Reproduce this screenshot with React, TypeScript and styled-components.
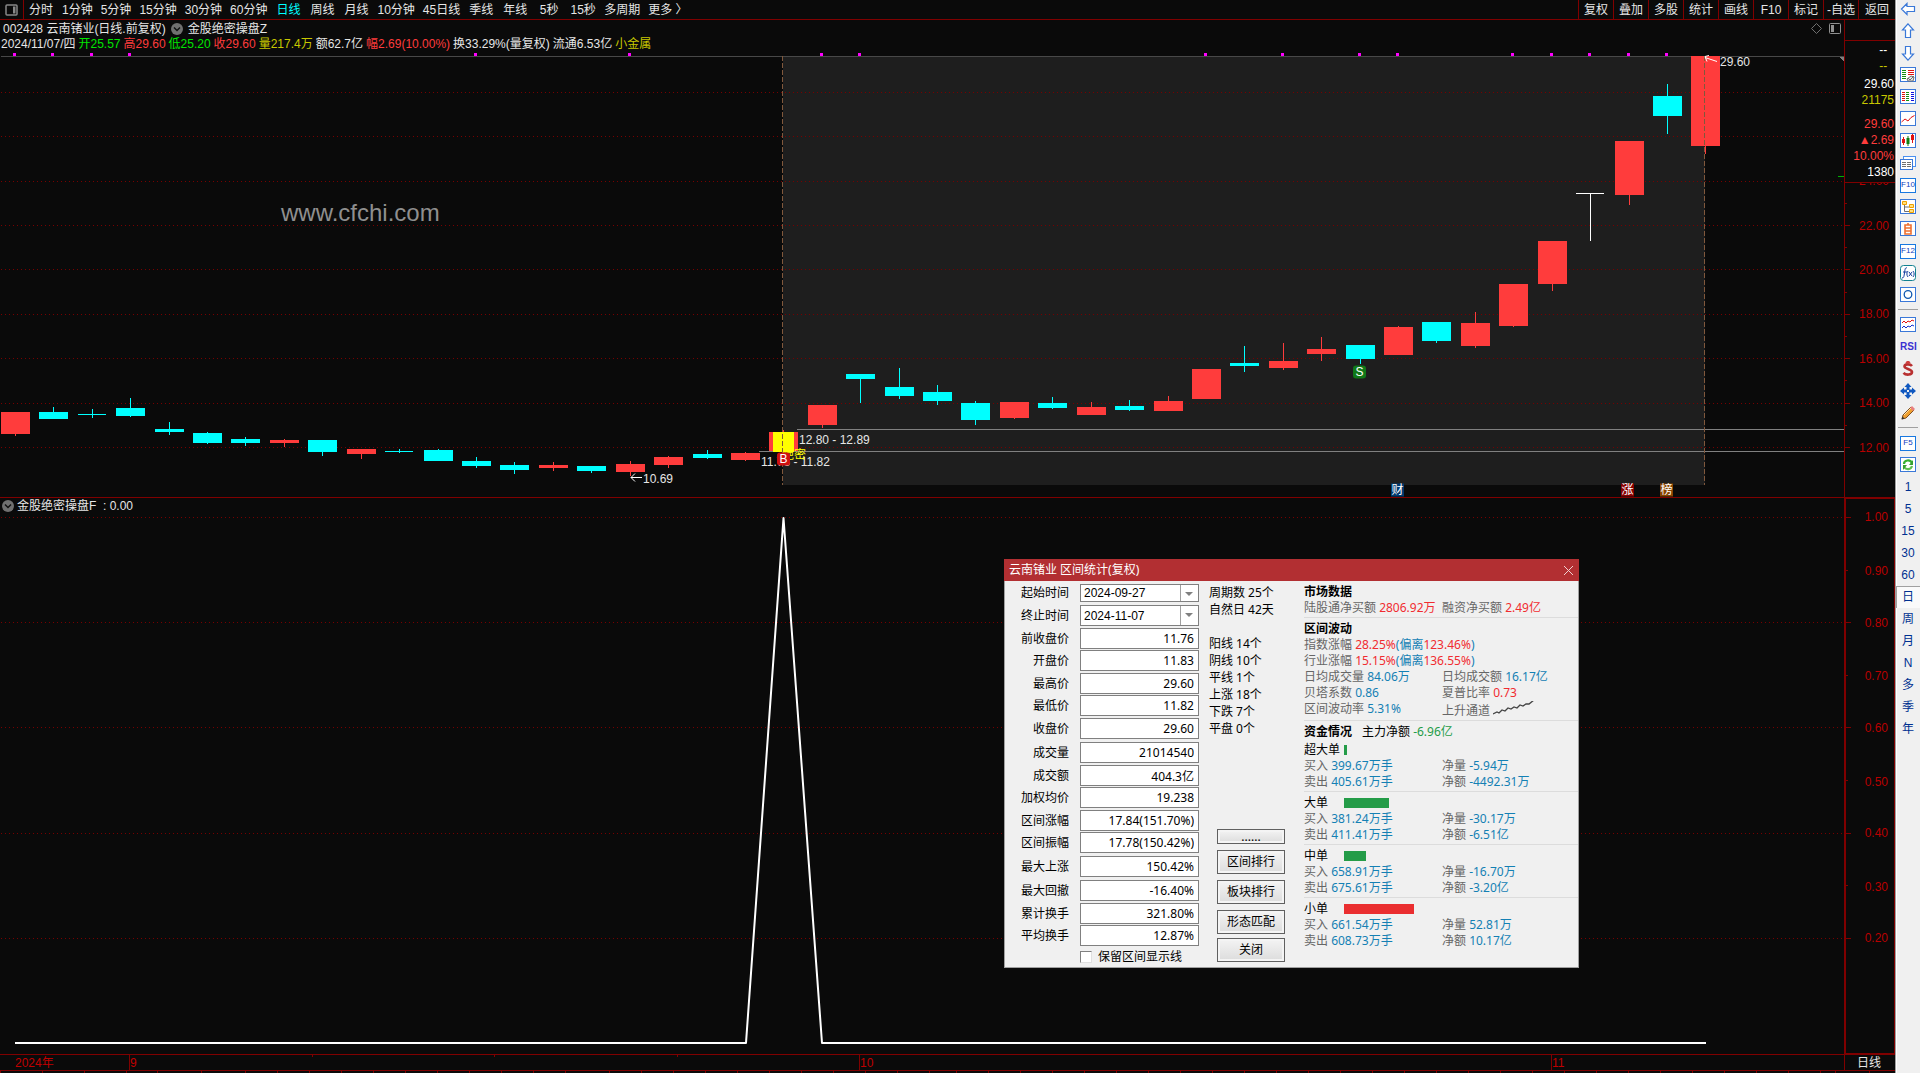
import React from 'react';
import styled, { createGlobalStyle, css } from 'styled-components';

const SANS = '"Liberation Sans", "Noto Sans CJK SC", sans-serif';
const UI = '"Noto Sans", "Noto Sans CJK SC", sans-serif';
const LINE = '#800000';
const RED = '#ff3c3c';
const CYAN = '#00ffff';

const Global = createGlobalStyle`
  * { box-sizing: border-box; }
  body { margin: 0; background: #0a0a0a; overflow: hidden; }
  button, input, select { font: inherit; color: inherit; }
`;

/* ---------- data ---------- */

type Candle = { c: 'r' | 'c' | 'w'; top: number; bottom: number; high: number; low: number };
const k = (c: Candle['c'], top: number, bottom: number, high = top, low = bottom): Candle => ({ c, top, bottom, high, low });

const CANDLES: Candle[] = [
  k('r', 412, 434, 412, 436), k('c', 412, 419, 407, 419), k('c', 414, 415, 409, 418), k('c', 408, 416, 398, 417),
  k('c', 429, 432, 422, 435), k('c', 433, 443, 432, 444), k('c', 439, 443, 437, 446), k('r', 440, 443, 439, 447),
  k('c', 440, 452, 440, 456), k('r', 449, 454, 449, 459), k('c', 451, 452, 449, 453), k('c', 450, 461, 449, 461),
  k('c', 461, 466, 457, 468), k('c', 465, 470, 462, 474), k('r', 465, 468, 462, 471), k('c', 466, 471, 466, 473),
  k('r', 464, 472, 461, 476), k('r', 457, 465, 456, 468), k('c', 454, 458, 450, 459), k('r', 453, 460, 452, 461),
  k('r', 432, 451, 430, 451), k('r', 405, 425, 405, 428), k('c', 374, 379, 374, 403), k('c', 387, 396, 368, 399),
  k('c', 392, 401, 385, 405), k('c', 403, 420, 401, 425), k('r', 402, 418, 402, 419), k('c', 403, 408, 397, 409),
  k('r', 407, 415, 402, 415), k('c', 406, 410, 400, 411), k('r', 401, 411, 396, 411), k('r', 369, 399),
  k('c', 363, 366, 346, 372), k('r', 361, 368, 343, 370), k('r', 349, 354, 337, 361), k('c', 345, 359, 345, 364),
  k('r', 327, 355, 326, 355), k('c', 322, 341, 322, 343), k('r', 323, 346, 312, 348), k('r', 284, 326, 284, 327),
  k('r', 241, 284, 241, 291), k('w', 193, 194, 193, 241), k('r', 141, 195, 141, 205), k('c', 96, 116, 84, 134),
  k('r', 56, 146, 56, 154),
];
const centre = (i: number) => Math.floor(15.45 + 38.42 * i);
const FILL = { r: RED, c: CYAN, w: '#ffffff' };
const MARKS = [0, 1, 2, 3, 12, 16, 21, 22, 31, 33, 35, 36, 39, 40, 41, 42, 43];

const PERIODS = ['分时', '1分钟', '5分钟', '15分钟', '30分钟', '60分钟', '日线', '周线', '月线', '10分钟', '45日线', '季线', '年线', '5秒', '15秒', '多周期', '更多 〉'];
const ACTIONS = ['复权', '叠加', '多股', '统计', '画线', 'F10', '标记', '-自选', '返回'];

const PLOT_W = 1844;
const PRICE = { y: 51, h: 446 };
const IND = { y: 514, h: 540 };

/* ---------- frame ---------- */

const Screen = styled.div`
  display: flex;
  height: 100vh;
  background: #0a0a0a;
  color: #e6e6e6;
  font: 12px/16px ${SANS};
`;
const Main = styled.main`
  flex: 1;
  min-width: 0;
  display: grid;
  grid-template-rows: 20px minmax(0, 478fr) minmax(0, 556fr) 17px 2px;
`;
const TopBar = styled.nav`
  display: flex;
  justify-content: space-between;
  border-bottom: 1px solid ${LINE};
  overflow: hidden;
`;
const Group = styled.div`
  display: flex;
`;
const plain = css`
  border: 0;
  padding: 0;
  background: none;
  white-space: nowrap;
  cursor: pointer;
`;
const LayoutButton = styled.button`
  ${plain}
  width: 24px;
  display: grid;
  place-items: center;
  border-right: 1px solid ${LINE};
`;
const Period = styled.button<{ $on?: boolean }>`
  ${plain}
  min-width: 34px;
  padding: 0 4px;
  color: ${p => (p.$on ? CYAN : '#e6e6e6')};
`;
const Action = styled.button`
  ${plain}
  width: 35px;
  border-left: 1px solid ${LINE};
  &:last-child { width: 37px; }
`;
const Pane = styled.section`
  display: grid;
  grid-template-columns: minmax(0, 1fr) 51px;
  min-height: 0;
`;
const PricePane = styled(Pane)`
  border-bottom: 1px solid ${LINE};
`;
const Column = styled.div`
  display: flex;
  flex-direction: column;
  min-width: 0;
  min-height: 0;
`;
const TitleRow = styled.div`
  display: flex;
  align-items: center;
  gap: 5px;
  height: 17px;
  padding: 0 3px;
  white-space: nowrap;
`;
const QuoteRow = styled.div`
  display: flex;
  align-items: center;
  gap: 3px;
  height: 14px;
  padding-left: 1px;
  white-space: nowrap;
`;
const IndicatorRow = styled(TitleRow)`
  gap: 3px;
  height: 16px;
  padding: 0 2px;
`;
const Tone = styled.span<{ $c?: string }>`
  color: ${p => p.$c || '#e6e6e6'};
`;
const Corner = styled.div`
  display: flex;
  align-items: center;
  gap: 7px;
  margin-left: auto;
`;
const Plot = styled.div`
  position: relative;
  flex: 1;
  min-height: 0;
`;
const Drawing = styled.svg`
  position: absolute;
  inset: 0;
  width: 100%;
  height: 100%;
  display: block;
`;
const Note = styled.span<{ $c?: string }>`
  position: absolute;
  transform: translateY(-50%);
  line-height: 14px;
  white-space: nowrap;
  color: ${p => p.$c || '#e6e6e6'};
`;
const Badge = styled(Note)<{ $bg: string; $round?: boolean }>`
  width: 13px;
  height: 13px;
  line-height: 13px;
  text-align: center;
  color: #fff;
  background: ${p => p.$bg};
  border-radius: ${p => (p.$round ? 3 : 0)}px;
`;
const Watermark = styled(Note)`
  font-size: 24px;
  line-height: 28px;
  color: #8f8f8f;
`;
const AxisColumn = styled.div<{ $boxed?: boolean }>`
  position: relative;
  border-left: 1px solid ${LINE};
  ${p => p.$boxed && css`
    border: 1px solid ${LINE};
    border-left-width: 2px;
  `}
`;
const AxisLabel = styled.span`
  position: absolute;
  right: 6px;
  transform: translateY(-50%);
  line-height: 14px;
  color: #b80000;
`;
const Tick = styled.i<{ $major: boolean }>`
  position: absolute;
  left: 0;
  width: ${p => (p.$major ? 5 : 2)}px;
  height: 1px;
  background: ${LINE};
`;
const QuotePanel = styled.div`
  position: relative;
  z-index: 1;
  background: #0a0a0a;
  margin-top: 20px;
  border: solid ${LINE};
  border-width: 1px 0;
  padding: 1px 0 2px;
  display: flex;
  flex-direction: column;
  text-align: right;
`;
const Quote = styled.span<{ $c: string; $gap?: number }>`
  padding-right: 1px;
  margin-top: ${p => p.$gap || 0}px;
  color: ${p => p.$c};
`;
const TimeRow = styled.div`
  display: grid;
  grid-template-columns: minmax(0, 1fr) 51px;
  border: solid ${LINE};
  border-width: 1px 0;
`;
const TimeTrack = styled.div`
  position: relative;
`;
const TimeLabel = styled(Note)`
  top: 50%;
  color: #c00000;
`;
const TimeUnit = styled.div`
  border-left: 1px solid ${LINE};
  padding-left: 12px;
  line-height: 16px;
`;
const Ruler = styled.svg`
  display: block;
  width: 100%;
  height: 2px;
`;

/* ---------- right tool strip ---------- */

const Strip = styled.aside`
  width: 25px;
  flex: none;
  display: flex;
  flex-direction: column;
  background: #f0f0f0;
  border-left: 1px solid #a0a0a0;
  box-shadow: inset 1px 0 #fff;
  color: #003090;
`;
const Tool = styled.button<{ $on?: boolean; $head?: boolean }>`
  ${plain}
  flex: none;
  display: grid;
  place-items: center;
  height: ${p => (p.$head ? 20 : 22)}px;
  ${p => p.$on && css`
    background: #fafafa;
    box-shadow: inset 1px 1px #a0a0a0;
  `}
`;
const Rule = styled.hr`
  flex: none;
  width: 20px;
  height: 1px;
  margin: 3px auto 4px;
  border: 0;
  background: #a0a0a0;
`;
const TextIcon = styled.span<{ $bare?: boolean }>`
  width: 16px;
  height: 15px;
  display: grid;
  place-items: center;
  font-size: ${p => (p.$bare ? 10 : 8)}px;
  font-weight: ${p => (p.$bare ? 700 : 400)};
  line-height: 12px;
  color: ${p => (p.$bare ? '#3a30d0' : '#1040c0')};
  background: ${p => (p.$bare ? 'none' : '#fff')};
  border: ${p => (p.$bare ? '0' : '1px solid #1878e0')};
`;

const Ico = ({ children, frame = false }: { children: React.ReactNode; frame?: boolean }) => (
  <svg width="16" height="16" viewBox="0 0 16 16" fill="none" aria-hidden="true">
    {frame && <rect x=".5" y=".5" width="15" height="14" fill="#fff" stroke="#3a78d8" />}
    {children}
  </svg>
);
const rows = (x: number, w: number, color: string, n = 5) =>
  Array.from({ length: n }, (_, i) => <path key={`${x}${i}`} d={`M${x} ${3.5 + i * 2}h${w}`} stroke={color} />);

const TOOLS: [string, React.ReactNode][] = [
  ['后退', <Ico><path d="M1.5 7 7 1.5V4.500H14.500V9.500H7V12.500Z" fill="#fff" stroke="#3a78d8" strokeWidth="1.2" /></Ico>],
  ['上移', <Ico><path d="M8 .8 13.500 7H10.500V14.500H5.500V7H2.500Z" fill="#fff" stroke="#3a78d8" strokeWidth="1.200" /></Ico>],
  ['下移', <Ico><path d="M8 15.200 13.500 9H10.500V1.500H5.500V9H2.500Z" fill="#fff" stroke="#3a78d8" strokeWidth="1.200" /></Ico>],
  ['报价', <Ico frame><g shapeRendering="crispEdges">{rows(2, 4, '#109010')}{rows(8, 6, '#e01010', 3)}</g><path d="M7 12l4-3 3 1-1 4-5 0z" fill="#e8e8e8" stroke="#707070" /><path d="M8 11l2 2 4-4" stroke="#707070" /></Ico>],
  ['列表', <Ico frame><g shapeRendering="crispEdges">{rows(2, 3, '#e01010')}{rows(6, 3, '#109010')}{rows(11, 3, '#1010e0')}</g></Ico>],
  ['分时图', <Ico frame><path d="M1.500 11 5 8 8 10 11 6.500 14.500 4.500" stroke="#e01010" /></Ico>],
  ['K线图', <Ico frame><path d="M3.500 4v8M12.500 1v9" stroke="#e01010" /><path d="M8 3v10" stroke="#108010" /><path d="M2 6h3v4H2zM11 2h3v5h-3z" fill="#e01010" /><path d="M6.500 5h3v6h-3z" fill="#108010" /></Ico>],
  ['多窗口', <Ico><rect x="3.500" y="1.500" width="12" height="10" fill="#fff" stroke="#4a90f0" /><rect x=".5" y="4.500" width="12" height="10" fill="#fff" stroke="#3a78d8" /><path d="M2 7.500h4M7 7.500h4M2 9.500h4M7 9.500h4M2 11.500h4M7 11.500h4" stroke="#707070" /></Ico>],
  ['基本资料', <TextIcon>F10</TextIcon>],
  ['板块树', <Ico frame><path d="M4.500 5v7.500H9M4.500 8H9" stroke="#707070" /><path d="M2.500 2.500h4v3h-4zM9.500 5.500h4v3h-4zM9.500 10.500h4v3h-4z" fill="#ffe080" stroke="#f0a000" /></Ico>],
  ['自选股', <Ico frame><path d="M5 4h6v9H5zM8 2v2M5 7h6M5 10h6" stroke="#f07030" strokeWidth="1.600" /></Ico>],
  ['交易', <TextIcon>F12</TextIcon>],
  ['公式', <Ico><rect x=".5" y=".5" width="15" height="15" rx="3" fill="#fff" stroke="#108090" /><path d="M7 3C5 2 5 5 4.500 8S4 13 2 13M3 7h4M8 6c-1.500 2-1.500 4 0 6M13 6c1.500 2 1.500 4 0 6M9 7l3 4M12 7l-3 4" stroke="#1840a0" /></Ico>],
  ['圆', <Ico frame><circle cx="8" cy="7.500" r="3.800" stroke="#1058b0" strokeWidth="1.300" /></Ico>],
  ['-', null],
  ['叠加线', <Ico frame><path d="M2 6l2-2 2 2 2-2 2 1 2-2 2 1" stroke="#e01010" /><path d="M2 11l2-2 2 2 2-2 2 1 2-2 2 1" stroke="#1030d0" /></Ico>],
  ['RSI', <TextIcon $bare>RSI</TextIcon>],
  ['资金', <Ico><path d="M12 5C10 2.500 4.500 3 4.500 5.500S12 8 12 11s-6 3.500-8.500.8" stroke="#b83030" strokeWidth="2.600" /><path d="M8 0v3M6 2l2-2 2 2" stroke="#d04040" strokeWidth="1.500" /></Ico>],
  ['移动', <Ico><path d="M8 0l3.500 4H9.500v2.500H12v-2L16 8l-4 3.500v-2H9.500V12h2L8 16l-3.500-4h2V9.500H4v2L0 8l4-3.500v2h2.500V4h-2z" fill="#1058c0" /><path d="M7 7h2v2H7z" fill="#f0f0f0" /></Ico>],
  ['画笔', <Ico><path d="M2 14l1-4 8-8 3 3-8 8z" fill="#f0a030" stroke="#805020" /><path d="M10 3l3 3 2-2-3-3z" fill="#e88080" /><path d="M4 10l7-7" stroke="#ffe0a0" /><path d="M1.500 14.500l1-3 2 2z" fill="#333" /></Ico>],
  ['-', null],
  ['切换', <TextIcon>F5</TextIcon>],
  ['刷新', <Ico frame><path d="M4 7c0-4 6-5 8-1" stroke="#38b030" strokeWidth="2.200" /><path d="M12 9c-1 4-6 4-8 1" stroke="#60c050" strokeWidth="2.200" /><path d="M13 3v5H9zM3 13V8h4z" fill="#38a030" /></Ico>],
];
const SPANS = ['1', '5', '15', '30', '60', '日', '周', '月', 'N', '多', '季', '年'];

/* ---------- statistics window ---------- */

const Window = styled.section`
  position: absolute;
  left: 1004px;
  top: 559px;
  width: 575px;
  background: #f0f0f0;
  border: 1px solid #a0a0a0;
  border-top: 0;
  color: #000;
  font: 12px/16px ${UI};
`;
const WindowBar = styled.header`
  display: flex;
  align-items: center;
  justify-content: space-between;
  height: 22px;
  margin: 0 -1px;
  padding: 0 5px;
  background: #b22f32;
  color: #fff;
`;
const Close = styled.button`
  ${plain}
  width: 11px;
  height: 18px;
  display: flex;
  align-items: center;
`;
const WindowBody = styled.div`
  display: grid;
  grid-template-columns: 194px 85px minmax(0, 1fr);
  gap: 10px;
  height: 386px;
`;
const Form = styled.form`
  display: flex;
  flex-direction: column;
  gap: 3px;
  padding-top: 3px;
`;
const Fields = styled.div`
  display: flex;
  flex-direction: column;
`;
const Field = styled.label<{ $h?: number }>`
  display: grid;
  grid-template-columns: 64px 119px;
  column-gap: 11px;
  align-items: center;
  height: ${p => p.$h || 21}px;
  text-align: right;
  &:nth-child(odd) { margin-bottom: 2px; }
  &:nth-child(even) { margin-bottom: 1px; }
  &:last-child { margin-bottom: 0; }
`;
const Value = styled.input`
  width: 100%;
  height: 100%;
  padding: 0 4px;
  border: 1px solid #808080;
  background: #fff;
  text-align: right;
  outline: 0;
`;
const Picker = styled.span`
  position: relative;
  display: block;
  height: 100%;
  border: 1px solid #808080;
  background: #fff;
  &::before {
    content: '';
    position: absolute;
    right: 17px;
    top: 0;
    bottom: 0;
    border-left: 1px solid #a0a0a0;
  }
  &::after {
    content: '';
    position: absolute;
    right: 5px;
    top: 7px;
    border: 4px solid transparent;
    border-top-color: #808080;
    border-bottom: 0;
    pointer-events: none;
  }
`;
const Dates = styled.select`
  appearance: none;
  display: block;
  width: 100%;
  height: 100%;
  padding: 0 20px 0 3px;
  border: 0;
  border-radius: 0;
  background: transparent;
  font: 12px/16px ${SANS};
  outline: 0;
`;
const Keep = styled.label`
  display: flex;
  align-items: center;
  gap: 6px;
  margin-left: 75px;
  white-space: nowrap;
  input {
    appearance: none;
    width: 12px;
    height: 12px;
    margin: 0;
    background: #fff;
    border: 1px solid;
    border-color: #808080 #e0e0e0 #e0e0e0 #808080;
  }
`;
const Middle = styled.div`
  display: flex;
  flex-direction: column;
  justify-content: space-between;
  padding: 3px 0 5px;
`;
const Counts = styled.div`
  line-height: 17px;
  white-space: nowrap;
  p { margin: 0; }
  p:nth-child(3) { margin-top: 17px; }
`;
const Buttons = styled.div`
  display: flex;
  flex-direction: column;
  gap: 4px;
  margin-left: 8px;
  width: 68px;
`;
const Push = styled.button<{ $slim?: boolean }>`
  height: ${p => (p.$slim ? 15 : 24)}px;
  padding: 0;
  border: 1px solid #606060;
  box-shadow: inset 0 0 0 2px #f4f4f4;
  background: linear-gradient(#f4f4f4, #dcdcdc);
  line-height: ${p => (p.$slim ? 12 : 16)}px;
  white-space: nowrap;
  & + &:not(:last-child) { margin-top: 2px; }
  &:first-child { margin-bottom: 2px; }
`;
const Report = styled.div`
  white-space: nowrap;
`;
const Part = styled.div<{ $b: number }>`
  padding: 3px 0 ${p => p.$b}px;
  border-bottom: 1px solid #dcdcdc;
  &:last-child { border: 0; }
`;
const Pair = styled.div`
  display: grid;
  grid-template-columns: 138px 1fr;
  height: 16px;
  color: #666;
`;
const Heading = styled.h3`
  margin: 0;
  height: 16px;
  font-size: 12px;
  line-height: 16px;
`;
const HeadLine = styled.div`
  display: flex;
  gap: 10px;
  height: 18px;
`;
const OrderLine = styled.div`
  display: grid;
  grid-template-columns: 40px 1fr;
  align-items: center;
  height: 16px;
`;
const Bar = styled.i<{ $c: string }>`
  height: 10px;
  background: ${p => p.$c};
`;
const B = styled.span` color: #1480b4; `;
const R = styled.span` color: #f02c30; `;
const G = styled.span` color: #249c48; `;

const GROUPS: [string, string][][] = [
  [['前收盘价', '11.76'], ['开盘价', '11.83'], ['最高价', '29.60'], ['最低价', '11.82'], ['收盘价', '29.60']],
  [['成交量', '21014540'], ['成交额', '404.3亿'], ['加权均价', '19.238'], ['区间涨幅', '17.84(151.70%)'], ['区间振幅', '17.78(150.42%)']],
  [['最大上涨', '150.42%']],
  [['最大回撤', '-16.40%'], ['累计换手', '321.80%'], ['平均换手', '12.87%']],
];
const ORDERS = [
  { name: '超大单', w: 3, c: '#249c48', v: ['399.67万手', '-5.94万', '405.61万手', '-4492.31万'] },
  { name: '大单', w: 45, c: '#249c48', v: ['381.24万手', '-30.17万', '411.41万手', '-6.51亿'] },
  { name: '中单', w: 22, c: '#249c48', v: ['658.91万手', '-16.70万', '675.61万手', '-3.20亿'] },
  { name: '小单', w: 70, c: '#ea2e30', v: ['661.54万手', '52.81万', '608.73万手', '10.17亿'] },
];

function Order({ o }: { o: (typeof ORDERS)[number] }) {
  return (
    <>
      <OrderLine>{o.name}<Bar $c={o.c} style={{ width: o.w }} /></OrderLine>
      <Pair><span>买入 <B>{o.v[0]}</B></span><span>净量 <B>{o.v[1]}</B></span></Pair>
      <Pair><span>卖出 <B>{o.v[2]}</B></span><span>净额 <B>{o.v[3]}</B></span></Pair>
    </>
  );
}

function Statistics() {
  return (
    <Window role="dialog" aria-label="区间统计">
      <WindowBar>
        <span>云南锗业 区间统计(复权)</span>
        <Close aria-label="关闭窗口"><svg width="11" height="11" viewBox="0 0 11 11"><path d="M1 1l9 9M10 1l-9 9" stroke="#f0d0d0" fill="none" /></svg></Close>
      </WindowBar>
      <WindowBody>
        <Form onSubmit={e => e.preventDefault()}>
          <Fields>
            <Field $h={18}>起始时间<Picker><Dates><option>2024-09-27</option></Dates></Picker></Field>
          </Fields>
          {GROUPS.map((g, i) => (
            <Fields key={i}>
              {i === 0 && <Field>终止时间<Picker><Dates><option>2024-11-07</option></Dates></Picker></Field>}
              {g.map(([name, v]) => <Field key={name}>{name}<Value readOnly value={v} /></Field>)}
            </Fields>
          ))}
          <Keep><input type="checkbox" />保留区间显示线</Keep>
        </Form>
        <Middle>
          <Counts>
            <p>周期数 25个</p><p>自然日 42天</p>
            <p>阳线 14个</p><p>阴线 10个</p><p>平线 1个</p><p>上涨 18个</p><p>下跌 7个</p><p>平盘 0个</p>
          </Counts>
          <Buttons>
            <Push $slim>......</Push><Push>区间排行</Push><Push>板块排行</Push><Push>形态匹配</Push><Push>关闭</Push>
          </Buttons>
        </Middle>
        <Report>
          <Part $b={1}>
            <Heading>市场数据</Heading>
            <Pair><span>陆股通净买额 <R>2806.92万</R></span><span>融资净买额 <R>2.49亿</R></span></Pair>
          </Part>
          <Part $b={3}>
            <Heading>区间波动</Heading>
            <Pair><span>指数涨幅 <R>28.25%</R><B>(偏离</B><R>123.46%</R><B>)</B></span></Pair>
            <Pair><span>行业涨幅 <R>15.15%</R><B>(偏离</B><R>136.55%</R><B>)</B></span></Pair>
            <Pair><span>日均成交量 <B>84.06万</B></span><span>日均成交额 <B>16.17亿</B></span></Pair>
            <Pair><span>贝塔系数 <B>0.86</B></span><span>夏普比率 <R>0.73</R></span></Pair>
            <Pair>
              <span>区间波动率 <B>5.31%</B></span>
              <span>上升通道 <svg width="41" height="14" viewBox="0 0 41 14"><path d="M0 13l4-2 2 1 3-3 3 1 3-3 3 1 3-2 3 1 3-3 3 1 3-2 3 0 5-4" stroke="#444" strokeWidth="1.300" fill="none" /></svg></span>
            </Pair>
          </Part>
          <Part $b={1}>
            <HeadLine><Heading>资金情况</Heading><span>主力净额 <G>-6.96亿</G></span></HeadLine>
            <Order o={ORDERS[0]} />
          </Part>
          {ORDERS.slice(1).map(o => <Part key={o.name} $b={1}><Order o={o} /></Part>)}
        </Report>
      </WindowBody>
    </Window>
  );
}

/* ---------- charts ---------- */

const spot = (x: number, y: number, area: { y: number; h: number }) => ({
  left: `${(x / PLOT_W) * 100}%`,
  top: `${((y - area.y) / area.h) * 100}%`,
});
const priceY = (p: number) => 447.5 - (p - 12) * 22.2;
const indY = (v: number) => 517.5 + (1 - v) * 526;

const Fold = () => (
  <svg width="12" height="12" viewBox="0 0 12 12" aria-hidden="true">
    <circle cx="6" cy="6" r="6" fill="#707070" /><path d="M3 4.500l3 3 3-3" stroke="#111" strokeWidth="1.500" fill="none" />
  </svg>
);

function PriceChart() {
  return (
    <Plot>
      <Drawing viewBox={`0 ${PRICE.y} ${PLOT_W} ${PRICE.h}`} preserveAspectRatio="none" shapeRendering="crispEdges">
        <rect x="783" y="56" width="922" height="429" fill="#1e1e1e" />
        {[12, 14, 16, 18, 20, 22, 24, 26, 28].map(p => (
          <path key={p} d={`M1 ${Math.floor(priceY(p)) + 0.5}H1844`} stroke="#780000" strokeDasharray="1 3" />
        ))}
        <path d="M1 56.500H1844" stroke="#484848" />
        <path d="M1839 57h5v4z" fill="#808080" />
        {MARKS.map(i => <rect key={i} x={centre(i) - 2} y="53" width="3" height="3" fill="#ff00ff" />)}
        <path d="M797 429.500H1844M759 451.500H1844" stroke="#808080" />
        {CANDLES.map((d, i) => (
          <g key={i} fill={FILL[d.c]}>
            <rect x={centre(i)} y={d.high} width="1" height={d.low - d.high} />
            <rect x={centre(i) - 14} y={d.top} width={d.bottom - d.top === 1 ? 28 : 29} height={d.bottom - d.top} />
          </g>
        ))}
        <rect x="773" y="432" width="21" height="20" fill="#ffff00" />
        <path d="M782.500 56V485M1704.500 56V485" stroke="#80583c" strokeDasharray="5 2" />
        <path d="M1838 176.500h6" stroke="#00b000" />
        <g stroke="#fff" fill="none" shapeRendering="auto">
          <path d="M631 477.500H642M635 473.500l-4 4 4 4" />
          <path d="M1705 57.500l12 4M1709 55.500l-4 1 2 5" />
        </g>
      </Drawing>
      <Watermark style={spot(281, 213, PRICE)}>www.cfchi.com</Watermark>
      <Note style={spot(1720, 62, PRICE)}>29.60</Note>
      <Note style={spot(643, 479, PRICE)}>10.69</Note>
      <Note style={spot(799, 440, PRICE)}>12.80 - 12.89</Note>
      <Note style={spot(761, 462, PRICE)}>11.76 - 11.82</Note>
      <Note $c="#ffff00" style={spot(782, 455, PRICE)}>绝密</Note>
      <Badge $bg="#d01010" $round style={spot(777, 459, PRICE)}>B</Badge>
      <Badge $bg="#107818" $round style={spot(1353, 372, PRICE)}>S</Badge>
      <Badge $bg="#003a70" style={spot(1391, 490, PRICE)}>财</Badge>
      <Badge $bg="#880000" style={spot(1621, 490, PRICE)}>涨</Badge>
      <Badge $bg="#884400" style={spot(1660, 490, PRICE)}>榜</Badge>
    </Plot>
  );
}

function IndicatorChart() {
  return (
    <Plot>
      <Drawing viewBox={`0 ${IND.y} ${PLOT_W} ${IND.h}`} preserveAspectRatio="none">
        {[1, 0.8, 0.6, 0.4, 0.2].map(v => (
          <path key={v} d={`M1 ${Math.floor(indY(v)) + 0.5}H1844`} stroke="#780000" strokeDasharray="1 3" shapeRendering="crispEdges" />
        ))}
        <path d="M15 1043H746L783.500 518L822 1043H1706" stroke="#fff" strokeWidth="2" fill="none" strokeLinejoin="round" />
      </Drawing>
    </Plot>
  );
}

const pct = (y: number, top: number, h: number) => ({ top: `${((y - top) / h) * 100}%` });
const TICKS = [0, 42, 84, 126, 157, 201, 245, 277, 309, 341, 373, 405, 437, 469, 501, 533, 565, 609, 641, 673, 705, 737, 769, 801, 833, 865, 897, 929,
  ...Array.from({ length: 28 }, (_, i) => 956 + i * 32), 1835, 1869];

export default function App() {
  return (
    <Screen>
      <Global />
      <Main>
        <TopBar>
          <Group>
            <LayoutButton aria-label="布局">
              <svg width="13" height="12" viewBox="0 0 13 12"><rect x="1" y="1" width="11" height="10" rx="1" stroke="#888" strokeWidth="1.500" fill="none" /><path d="M8 2.500h2.500v7H8z" fill="#888" /></svg>
            </LayoutButton>
            {PERIODS.map(p => <Period key={p} $on={p === '日线'}>{p}</Period>)}
          </Group>
          <Group>{ACTIONS.map(a => <Action key={a}>{a}</Action>)}</Group>
        </TopBar>

        <PricePane>
          <Column>
            <TitleRow>
              <span>002428 云南锗业(日线.前复权)</span><Fold /><span>金股绝密操盘Z</span>
              <Corner>
                <svg width="11" height="11" viewBox="0 0 11 11"><path d="M5.500.5l5 5-5 5-5-5z" stroke="#707070" fill="none" /></svg>
                <svg width="12" height="11" viewBox="0 0 12 11"><rect x=".5" y=".5" width="11" height="10" rx="1" stroke="#909090" fill="none" /><path d="M2 2h3v7H2z" fill="#909090" /></svg>
              </Corner>
            </TitleRow>
            <QuoteRow>
              <Tone>2024/11/07/四</Tone><Tone $c="#00e600">开25.57</Tone><Tone $c={RED}>高29.60</Tone><Tone $c="#00e600">低25.20</Tone>
              <Tone $c={RED}>收29.60</Tone><Tone $c="#c8c800">量217.4万</Tone><Tone>额62.7亿</Tone><Tone $c={RED}>幅2.69(10.00%)</Tone>
              <Tone>换33.29%(量复权)</Tone><Tone>流通6.53亿</Tone><Tone $c="#c8c800">小金属</Tone>
            </QuoteRow>
            <PriceChart />
          </Column>
          <AxisColumn>
            <QuotePanel>
              <Quote $c="#fff">--&nbsp;&nbsp;</Quote>
              <Quote $c="#c8c800">--&nbsp;&nbsp;</Quote>
              <Quote $c="#fff" $gap={2}>29.60</Quote>
              <Quote $c="#c8c800">21175</Quote>
              <Quote $c={RED} $gap={8}>29.60</Quote>
              <Quote $c={RED}>▲2.69</Quote>
              <Quote $c={RED}>10.00%</Quote>
              <Quote $c="#fff">1380</Quote>
            </QuotePanel>
            {Array.from({ length: 13 }, (_, i) => 12 + i).map(p => (
              <React.Fragment key={p}>
                <Tick $major={p % 2 === 0} style={pct(Math.floor(priceY(p)), 20, 477)} />
                {p % 2 === 0 && <AxisLabel style={pct(priceY(p), 20, 477)}>{p.toFixed(2)}</AxisLabel>}
              </React.Fragment>
            ))}
          </AxisColumn>
        </PricePane>

        <Pane>
          <Column>
            <IndicatorRow><Fold /><span>金股绝密操盘F&nbsp; : 0.00</span></IndicatorRow>
            <IndicatorChart />
          </Column>
          <AxisColumn $boxed>
            {[1, 0.9, 0.8, 0.7, 0.6, 0.5, 0.4, 0.3, 0.2].map((v, i) => (
              <React.Fragment key={v}>
                <Tick $major={i % 2 === 0} style={pct(Math.floor(indY(v)), 499, 554)} />
                <AxisLabel style={pct(indY(v) + (i % 2), 499, 554)}>{v.toFixed(2)}</AxisLabel>
              </React.Fragment>
            ))}
          </AxisColumn>
        </Pane>

        <TimeRow>
          <TimeTrack>
            <Drawing viewBox="0 0 1844 15" preserveAspectRatio="none" shapeRendering="crispEdges">
              <path d="M129.500 0V15M859.500 0V15M1551.500 0V15M312.500 0V2M494.500 0V2M677.500 0V2" stroke={LINE} />
            </Drawing>
            {([[15, '2024年'], [130, '9'], [860, '10'], [1552, '11']] as [number, string][]).map(([x, t]) => (
              <TimeLabel key={t} style={{ left: `${(x / PLOT_W) * 100}%` }}>{t}</TimeLabel>
            ))}
          </TimeTrack>
          <TimeUnit>日线</TimeUnit>
        </TimeRow>
        <Ruler viewBox="0 0 1895 2" preserveAspectRatio="none" shapeRendering="crispEdges">
          <path d={TICKS.map(x => `M${x + 0.5} 0V2`).join('')} stroke={LINE} />
        </Ruler>
      </Main>

      <Strip>
        {TOOLS.map(([name, icon], i) => (name === '-' ? <Rule key={i} /> : <Tool key={i} $head={i === 0} aria-label={name}>{icon}</Tool>))}
        {SPANS.map(s => <Tool key={s} $on={s === '日'}>{s}</Tool>)}
      </Strip>

      <Statistics />
    </Screen>
  );
}
